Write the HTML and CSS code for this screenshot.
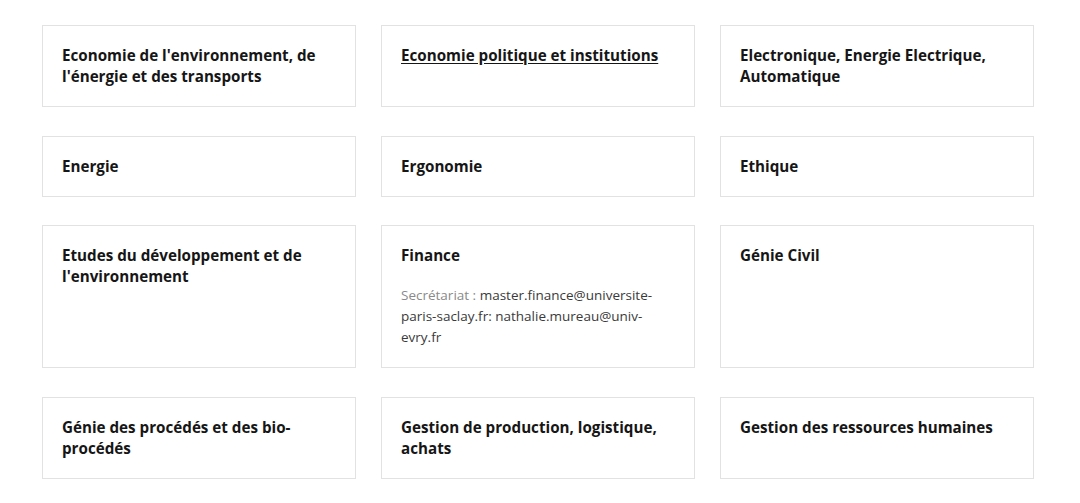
FILE: index.html
```html
<!DOCTYPE html>
<html lang="fr">
<head>
<meta charset="UTF-8">
<meta name="viewport" content="width=device-width, initial-scale=1.0">
<title>Masters</title>
<link rel="stylesheet" href="styles.css">
</head>
<body>
  <div class="card-grid">
    <div class="card">
      <h3 class="card-title">Economie de l'environnement, de l'énergie et des transports</h3>
    </div>
    <div class="card">
      <h3 class="card-title"><a href="#">Economie politique et institutions</a></h3>
    </div>
    <div class="card">
      <h3 class="card-title">Electronique, Energie Electrique, Automatique</h3>
    </div>

    <div class="card">
      <h3 class="card-title">Energie</h3>
    </div>
    <div class="card">
      <h3 class="card-title">Ergonomie</h3>
    </div>
    <div class="card">
      <h3 class="card-title">Ethique</h3>
    </div>

    <div class="card">
      <h3 class="card-title">Etudes du développement et de l'environnement</h3>
    </div>
    <div class="card">
      <h3 class="card-title">Finance</h3>
      <p class="card-info"><span class="label">Secrétariat :</span> master.finance@universite-paris-saclay.fr: nathalie.mureau@univ-evry.fr</p>
    </div>
    <div class="card">
      <h3 class="card-title">Génie Civil</h3>
    </div>

    <div class="card">
      <h3 class="card-title">Génie des procédés et des bio-procédés</h3>
    </div>
    <div class="card">
      <h3 class="card-title">Gestion de production, logistique, achats</h3>
    </div>
    <div class="card">
      <h3 class="card-title">Gestion des ressources humaines</h3>
    </div>
  </div>
</body>
</html>
```

FILE: styles.css
```css
body {
  margin: 0;
  background: #fff;
  font-family: "Open Sans", "Liberation Sans", sans-serif;
  color: #1a1a1a;
}
.card-grid {
  display: grid;
  grid-template-columns: repeat(3, 314px);
  column-gap: 25px;
  row-gap: 28.5px;
  padding: 25px 0 0 42px;
}
.card {
  border: 1px solid #e2e2e2;
  padding: 19px;
  min-height: 21px;
}
.card-title {
  margin: 0;
  font-size: 15.2px;
  font-weight: 700;
  line-height: 21px;
  color: #161616;
}
.card-title a {
  color: inherit;
  text-decoration: underline;
  text-underline-offset: 2px;
}
.card-info {
  margin: 19px 0 0;
  font-size: 13.5px;
  line-height: 21px;
  color: #3a3a3a;
}
.card-info .label {
  color: #8a8a8a;
}
```
